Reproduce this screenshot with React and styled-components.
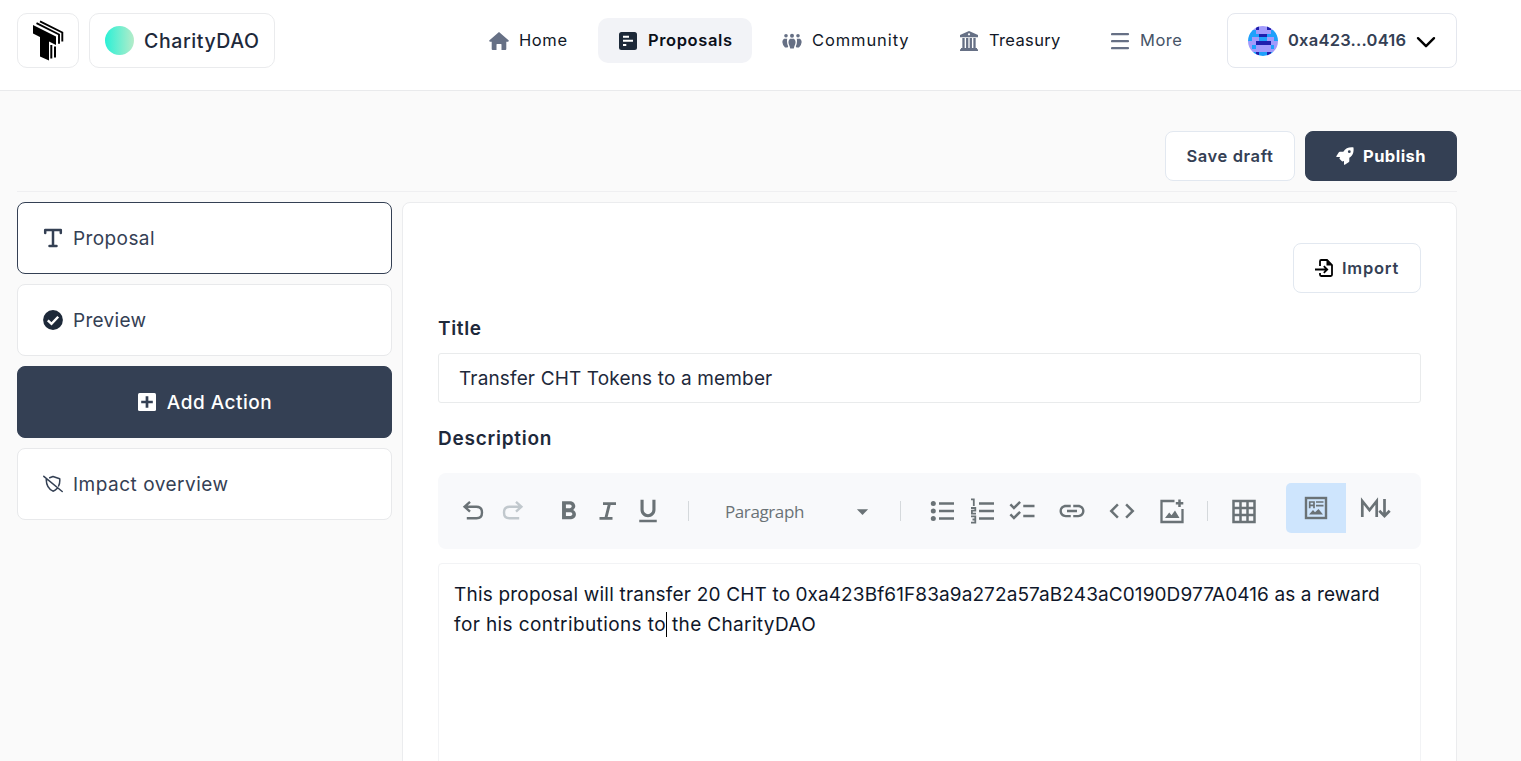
import React from "react";
import styled, { createGlobalStyle } from "styled-components";
import {
  MdFormatBold,
  MdFormatUnderlined,
  MdChecklist,
  MdLink,
  MdCode,
  MdArrowDropDown,
} from "react-icons/md";

const GlobalStyle = createGlobalStyle`
  *, *::before, *::after { box-sizing: border-box; }
  body {
    margin: 0;
    background: #fafafa;
    font-family: Inter, "Liberation Sans", sans-serif;
    color: #1e293b;
  }
  svg { display: block; flex: none; }
`;

const Page = styled.div`
  height: 761px;
  overflow: hidden;
  display: flex;
  flex-direction: column;
`;

const Text = styled.span`
  font-size: ${(p) => p.$size || 16.5}px;
  font-weight: ${(p) => p.$weight || 400};
  letter-spacing: ${(p) => p.$track || 0}px;
  color: ${(p) => p.$color || "inherit"};
  white-space: nowrap;
`;

const Header = styled.header`
  display: flex;
  height: 91px;
  flex: none;
  padding: 13px 64px 0 17px;
  background: #fff;
  border-bottom: 1px solid #e9eaec;
`;

const LogoBox = styled.a`
  width: 62px;
  height: 55px;
  border: 1px solid #eaebed;
  border-radius: 10px;
  display: flex;
  align-items: center;
  justify-content: center;
`;

const OrgBox = styled(LogoBox)`
  width: 186px;
  margin-left: 10px;
  padding-left: 15px;
  justify-content: flex-start;
  gap: 10px;
`;

const OrgAvatar = styled.span`
  width: 29px;
  height: 29px;
  border-radius: 50%;
  background: linear-gradient(90deg, #2af0d6, #b5ecc9);
`;

const Nav = styled.nav`
  display: flex;
  gap: 10px;
  margin: 5px 0 0 194px;
`;

const NavItem = styled.a`
  display: flex;
  align-items: center;
  gap: 10px;
  width: ${(p) => p.$width}px;
  height: 45px;
  padding-left: 20px;
  border-radius: 10px;
  background: ${(p) => (p.$active ? "#f2f3f7" : "transparent")};
  color: ${(p) => (p.$active ? "#0b0f19" : p.$muted ? "#475467" : "#111827")};

  ${Text} {
    margin-bottom: 2px;
  }
`;

const Wallet = styled.button`
  display: flex;
  align-items: center;
  width: 230px;
  height: 55px;
  margin-left: auto;
  padding: 0 0 0 20px;
  gap: 10px;
  border: 1px solid #e4e7ee;
  border-radius: 8px;
  background: #fff;
  font-family: inherit;
  color: #344054;

  ${Text} {
    margin-bottom: 2px;
  }
`;

const Main = styled.main`
  display: flex;
  flex-direction: column;
  width: 1440px;
  margin: 40px 0 0 17px;
  flex: 1;
  min-height: 0;
`;

const Actions = styled.div`
  display: flex;
  justify-content: flex-end;
  gap: 10px;
  padding-bottom: 10px;
  border-bottom: 1px solid #efeff1;
`;

const Button = styled.button`
  display: flex;
  align-items: center;
  justify-content: center;
  gap: 9px;
  width: ${(p) => p.$width}px;
  height: 50px;
  padding: 0;
  border: 1px solid ${(p) => (p.$dark ? "#344054" : "#e2e8f0")};
  border-radius: 8px;
  background: ${(p) => (p.$dark ? "#344054" : "#fff")};
  color: ${(p) => (p.$dark ? "#fff" : "#344054")};
  font-family: inherit;
`;

const Columns = styled.div`
  display: flex;
  gap: 10px;
  margin-top: 10px;
  flex: 1;
  min-height: 0;
`;

const Sidebar = styled.aside`
  display: flex;
  flex-direction: column;
  gap: 10px;
  width: 375px;
`;

const Step = styled.div`
  display: flex;
  align-items: center;
  justify-content: ${(p) => (p.$dark ? "center" : "flex-start")};
  gap: 10px;
  height: 72px;
  padding: 0 25px;
  border: 1px solid ${(p) => (p.$dark || p.$active ? "#344054" : "#e8e9eb")};
  border-radius: 8px;
  background: ${(p) => (p.$dark ? "#344054" : "#fff")};
  color: ${(p) => (p.$dark ? "#fff" : "#344054")};
`;

const Panel = styled.section`
  flex: 1;
  display: flex;
  flex-direction: column;
  height: 700px;
  padding: 40px 35px 0;
  border: 1px solid #ebecee;
  border-radius: 8px;
  background: #fff;
`;

const PanelTop = styled.div`
  display: flex;
  justify-content: flex-end;
`;

const Label = styled.label`
  display: flex;
  align-items: center;
  height: 30px;
  margin: ${(p) => p.$margin};
`;

const TitleField = styled.div`
  display: flex;
  align-items: center;
  height: 50px;
  padding-left: 20px;
  border: 1px solid #e9ebec;
  border-radius: 3px;
`;

const Toolbar = styled.div`
  display: flex;
  align-items: center;
  height: 76px;
  flex: none;
  padding-left: 15px;
  border-radius: 8px;
  background: #f8f9fb;
  color: #6a7276;
`;

const Tool = styled.span`
  display: flex;
  align-items: center;
  justify-content: center;
  width: ${(p) => p.$width || 40}px;
  height: 40px;
  color: ${(p) => (p.$disabled ? "#c1c8cd" : "inherit")};
`;

const Divider = styled.span`
  width: 1px;
  height: 20px;
  margin: ${(p) => p.$margin};
  background: #d5d9dc;
`;

const BlockSelect = styled.span`
  display: flex;
  align-items: center;
  justify-content: space-between;
  width: 151px;
  font-family: "Open Sans", "Noto Sans", sans-serif;
`;

const ModeSwitch = styled.span`
  display: flex;
  margin: 0 0 6px 22px;
`;

const ModeTool = styled.span`
  display: flex;
  align-items: center;
  justify-content: center;
  width: 60px;
  height: 50px;
  border-radius: 5px 0 0 5px;
  background: ${(p) => (p.$active ? "#cee5fd" : "transparent")};
`;

const Editor = styled.div`
  flex: 1;
  margin-top: 14px;
  padding: 15px;
  border: 1px solid #f2f3f5;
  border-radius: 4px;
  color: #0f172a;
`;

const Line = styled.p`
  display: flex;
  align-items: center;
  gap: ${(p) => p.$gap || 0}px;
  height: 30px;
  margin: 0;
`;

const Caret = styled.span`
  width: 1px;
  height: 25px;
  margin-right: 5px;
  background: #000;
`;

const LogoMark = () => (
  <svg width="32" height="42" viewBox="0 0 32 42">
    <path d="M1 5 24 16.500V25L17 21.500V40.500L8 36.500V17L1 13.500Z" fill="#000" />
    <path d="M4.500 3.200 27 14.500V23.800M8 1.400 30.300 12.500V21.500" fill="none" stroke="#000" strokeWidth="1.900" />
    <path d="M19.300 25V38.500M23 26.500V37.500" fill="none" stroke="#000" strokeWidth="2" />
  </svg>
);

const HomeIcon = () => (
  <svg width="20" height="20" viewBox="0 0 20 20" fill="#667085">
    <path d="M10 1 19.800 9.600Q20 10.700 19 10.700H17.300V18Q17.300 19 16.300 19H12.500V13.500Q12.500 13 12 13H8Q7.500 13 7.500 13.500V19H3.700Q2.700 19 2.700 18V10.700H1Q0 10.700.2 9.600Z" />
  </svg>
);

const ProposalsIcon = () => (
  <svg width="20" height="20" viewBox="0 0 20 20">
    <rect x="1" y="1" width="18" height="18" rx="2.500" fill="#1d2939" />
    <path d="M5 5.700H11M5 9.800H15M5 13.900H8.300" stroke="#fff" strokeWidth="2" />
  </svg>
);

const CommunityIcon = () => (
  <svg width="20" height="20" viewBox="0 0 20 20" fill="#667085">
    <circle cx="4" cy="4.800" r="1.800" />
    <circle cx="10" cy="4.800" r="2" />
    <circle cx="16" cy="4.800" r="1.800" />
    <path d="M2 7.800H5.200Q4.500 12 6.200 15.500L5.500 16.500H3Q-1.800 11 2 7.800ZM18 7.800H14.800Q15.500 12 13.800 15.500L14.500 16.500H17Q21.800 11 18 7.800Z" />
    <path d="M8 7.800H12Q15 10.500 12.300 15.500L11.800 17.500H8.200L7.700 15.500Q5 10.500 8 7.800Z" />
  </svg>
);

const TreasuryIcon = () => (
  <svg width="20" height="22" viewBox="0 0 20 22">
    <path d="M10 1 19 5V7.300H1V5ZM2 18H18V19.300H19V21H1V19.300H2Z" fill="#667085" />
    <path d="M4.500 8V18M8.200 8V18M11.800 8V18M15.500 8V18" stroke="#667085" strokeWidth="2.300" />
    <circle cx="10" cy="4.300" r="1.100" fill="#fff" />
  </svg>
);

const MenuIcon = () => (
  <svg width="19" height="20" viewBox="0 0 19 20">
    <path d="M1 3.200H17M1 10.200H17M1 17.200H17" stroke="#667085" strokeWidth="2.200" strokeLinecap="round" />
  </svg>
);

const PIXELS = ["PPNPPNPP", "BBPPPPBB", "BBBNNBBB", "BPPBBPPB", "PPNNNNPP", "PBPPPPBP", "PPPPPPPP", "BBNBBNBB"];
const PIXEL_COLORS = { P: "#a29bfc", N: "#1f1fae", B: "#1fa1fb" };

const Blockie = () => (
  <svg width="30" height="30" viewBox="0 0 8 8" shapeRendering="crispEdges">
    <clipPath id="blockie-clip">
      <circle cx="4" cy="4" r="4" />
    </clipPath>
    <g clipPath="url(#blockie-clip)">
      {PIXELS.map((row, y) =>
        row.split("").map((c, x) => <rect key={`${x}-${y}`} x={x} y={y} width="1.020" height="1.020" fill={PIXEL_COLORS[c]} />)
      )}
    </g>
  </svg>
);

const ChevronIcon = () => (
  <svg width="20" height="20" viewBox="0 0 20 20">
    <path d="M2 7.200 10 15.200 18 7.200" fill="none" stroke="#000" strokeWidth="2.400" strokeLinecap="round" strokeLinejoin="round" />
  </svg>
);

const RocketIcon = () => (
  <svg width="18" height="18" viewBox="0 0 18 18">
    <path
      d="M17.500.4C12.500 0 9.600 1.300 7.300 4.700H3.800Q3.100 4.700 2.700 5.400L.3 9.200Q0 10 .8 10H4L3.400 11.800 6.200 14.600 8 14V17.200Q8 18 8.800 17.700L12.600 15.300Q13.300 14.900 13.300 14.200V10.700C16.700 8.400 18 5.500 17.500.4Z"
      fill="#fff"
    />
    <circle cx="13.300" cy="4.700" r="1.400" fill="#344054" />
  </svg>
);

const TypeIcon = () => (
  <svg width="20" height="20" viewBox="0 0 20 20">
    <path d="M2.200 5V2H17.800V5M10 2V18M6.500 18H13.500" fill="none" stroke="#344054" strokeWidth="2.500" strokeLinecap="round" strokeLinejoin="round" />
  </svg>
);

const CheckIcon = () => (
  <svg width="20" height="20" viewBox="0 0 20 20">
    <circle cx="10" cy="10" r="9.900" fill="#1d2939" />
    <path d="M4.800 10.300 8.500 13.900 15.200 6.700" fill="none" stroke="#fff" strokeWidth="2.400" />
  </svg>
);

const PlusSquareIcon = () => (
  <svg width="20" height="20" viewBox="0 0 20 20">
    <rect x="1" y="1" width="18" height="18" rx="1.500" fill="#fff" />
    <path d="M10 4.200V15.800M4.200 10H15.800" stroke="#344054" strokeWidth="2.700" />
  </svg>
);

const ShieldOffIcon = () => (
  <svg width="20" height="20" viewBox="0 0 20 20" fill="none" stroke="#344054" strokeWidth="1.500" strokeLinecap="round" strokeLinejoin="round">
    <path d="M.8 2.300 19.200 17.500M3.200 5.500C3.300 10.500 5.500 15 10 17.200 11.700 16.600 13 15.600 14 14.400M6.700 3.800 10 2.500 16.700 4.700C17 7.500 16.600 10 15.600 12" />
  </svg>
);

const ImportIcon = () => (
  <svg width="18" height="18" viewBox="0 0 18 18" fill="none" stroke="#000" strokeWidth="1.800">
    <path d="M5 7V2.200Q5 1 6.200 1H12L17 6V15.800Q17 17 15.800 17H6.200Q5 17 5 15.800V14" />
    <path d="M0 10.500H11.500M8.800 7.200 12.200 10.500 8.800 13.800" />
    <path d="M11.500 1V6.500H17Z" fill="#000" strokeWidth="0" />
  </svg>
);

const UndoIcon = ({ flip }) => (
  <svg width="22" height="22" viewBox="0 0 22 22" fill="none" stroke="currentColor" strokeWidth="2.400">
    <g transform={flip ? "translate(22 0) scale(-1 1)" : undefined}>
      <path d="M8 1.800 2.600 6.700 8 11.600M2.800 6.700H14.500Q20 6.700 20 12.500T14.500 18.300H4.800" />
    </g>
  </svg>
);

const ItalicIcon = () => (
  <svg width="20" height="20" viewBox="0 0 20 20" fill="none" stroke="currentColor" strokeWidth="2.900">
    <path d="M5 2.600H18M1.500 17.400H14.500M11.500 2.600 7.800 17.400" />
  </svg>
);

const BulletListIcon = () => (
  <svg width="26" height="26" viewBox="0 0 26 26">
    <path d="M10 5.500H25M10 13H25M10 20.500H25" stroke="currentColor" strokeWidth="2.700" />
    <g fill="currentColor">
      <circle cx="4.300" cy="5.500" r="2.500" />
      <circle cx="4.300" cy="13" r="2.500" />
      <circle cx="4.300" cy="20.500" r="2.500" />
    </g>
  </svg>
);

const NumberListIcon = () => (
  <svg width="26" height="28" viewBox="0 0 26 28" fill="none" stroke="currentColor">
    <path d="M10 6.500H25M10 14H25M10 21.500H25" strokeWidth="2.700" />
    <path d="M2 2.300H4.800V9M2 11H6.300V13.700H2.900V16.700H7M2 19.300H6.300V25.700H2M3.500 22.500H6" strokeWidth="1.800" />
  </svg>
);

const AddImageIcon = () => (
  <svg width="26" height="26" viewBox="0 0 26 26">
    <path d="M15.500 3H2.500V24H23.500V11" fill="none" stroke="currentColor" strokeWidth="2.300" />
    <path d="M20.500 1.500V9M16.800 5.200H24.300" stroke="currentColor" strokeWidth="2.500" />
    <path d="M6 20 10.200 14.500 12.500 17.300 16 12.500 20.500 20Z" fill="currentColor" />
  </svg>
);

const TableIcon = () => (
  <svg width="26" height="26" viewBox="0 0 26 26">
    <path d="M2.500 3H23.500V24H2.500ZM9.500 3V24M16.500 3V24M2.500 10H23.500M2.500 17H23.500" fill="none" stroke="currentColor" strokeWidth="2.500" />
  </svg>
);

const WysiwygIcon = () => (
  <svg width="24" height="24" viewBox="0 0 24 24" fill="none" stroke="currentColor">
    <rect x="2" y="2" width="20" height="20" strokeWidth="2.400" />
    <path d="M5.700 12.200V6H10V12.200M5.700 9.400H10" strokeWidth="1.700" />
    <path d="M12 6H19.500M12 9.700H19.500" strokeWidth="1.700" />
    <path d="M5 18.500 9 14 11 16.300 14.500 13 19 18.500Z" fill="currentColor" stroke="none" />
  </svg>
);

const MarkdownIcon = () => (
  <svg width="32" height="24" viewBox="0 0 32 24" fill="none" stroke="currentColor" strokeWidth="2.700">
    <path d="M2.300 21V5L9.500 14 16.700 5V21" />
    <path d="M24.500 3V20M19.300 14.700 24.500 20 29.700 14.700" />
  </svg>
);

export default function App() {
  return (
    <Page>
      <GlobalStyle />
      <Header>
        <LogoBox>
          <LogoMark />
        </LogoBox>
        <OrgBox>
          <OrgAvatar />
          <Text $size={19.5} $weight={500} $track={0.6}>CharityDAO</Text>
        </OrgBox>
        <Nav>
          <NavItem $width={119}>
            <HomeIcon />
            <Text $track={0.6}>Home</Text>
          </NavItem>
          <NavItem $width={154} $active>
            <ProposalsIcon />
            <Text $weight={600} $track={0.6}>Proposals</Text>
          </NavItem>
          <NavItem $width={167}>
            <CommunityIcon />
            <Text $track={0.9}>Community</Text>
          </NavItem>
          <NavItem $width={142}>
            <TreasuryIcon />
            <Text $track={0.35}>Treasury</Text>
          </NavItem>
          <NavItem $width={111} $muted>
            <MenuIcon />
            <Text $track={0.5}>More</Text>
          </NavItem>
        </Nav>
        <Wallet>
          <Blockie />
          <Text $weight={600} $track={0.23}>0xa423...0416</Text>
          <ChevronIcon />
        </Wallet>
      </Header>
      <Main>
        <Actions>
          <Button $width={130}>
            <Text $weight={600} $track={0.6}>Save draft</Text>
          </Button>
          <Button $width={152} $dark>
            <RocketIcon />
            <Text $weight={700} $track={0.45}>Publish</Text>
          </Button>
        </Actions>
        <Columns>
          <Sidebar>
            <Step $active>
              <TypeIcon />
              <Text $size={19} $track={0.4}>Proposal</Text>
            </Step>
            <Step>
              <CheckIcon />
              <Text $size={19} $track={0.3}>Preview</Text>
            </Step>
            <Step $dark>
              <PlusSquareIcon />
              <Text $size={19} $weight={500} $track={0.5}>Add Action</Text>
            </Step>
            <Step>
              <ShieldOffIcon />
              <Text $size={19} $track={0.5}>Impact overview</Text>
            </Step>
          </Sidebar>
          <Panel>
            <PanelTop>
              <Button $width={128}>
                <ImportIcon />
                <Text $weight={600} $track={0.8}>Import</Text>
              </Button>
            </PanelTop>
            <Label $margin="20px 0 10px">
              <Text $size={19} $weight={600} $track={0.65}>Title</Text>
            </Label>
            <TitleField>
              <Text $size={19} $track={0.15}>Transfer CHT Tokens to a member</Text>
            </TitleField>
            <Label $margin="20px 0">
              <Text $size={19} $weight={600} $track={0.75}>Description</Text>
            </Label>
            <Toolbar>
              <Tool><UndoIcon /></Tool>
              <Tool $disabled><UndoIcon flip /></Tool>
              <Tool $width={70}><MdFormatBold size={31} /></Tool>
              <Tool $width={10}><ItalicIcon /></Tool>
              <Tool $width={70}><MdFormatUnderlined size={30} /></Tool>
              <Divider $margin="0 36px 0 5px" />
              <BlockSelect>
                <Text $size={17} $track={-0.4}>Paragraph</Text>
                <MdArrowDropDown size={27} />
              </BlockSelect>
              <Divider $margin="0 21px 0 24px" />
              <Tool><BulletListIcon /></Tool>
              <Tool><NumberListIcon /></Tool>
              <Tool><MdChecklist size={30} /></Tool>
              <Tool $width={60}><MdLink size={30} /></Tool>
              <Tool><MdCode size={30} /></Tool>
              <Tool $width={60}><AddImageIcon /></Tool>
              <Divider $margin="0 16px 0 5px" />
              <Tool><TableIcon /></Tool>
              <ModeSwitch>
                <ModeTool $active><WysiwygIcon /></ModeTool>
                <ModeTool><MarkdownIcon /></ModeTool>
              </ModeSwitch>
            </Toolbar>
            <Editor>
              <Line $gap={5}>
                <Text $size={19} $track={0.2}>This proposal will transfer 20 CHT to</Text>
                <Text $size={19} $track={0.1}>0xa423Bf61F83a9a272a57aB243aC0190D977A0416 as a reward</Text>
              </Line>
              <Line>
                <Text $size={19} $track={0.4}>for his contributions to</Text>
                <Caret />
                <Text $size={19} $track={0.35}>the CharityDAO</Text>
              </Line>
            </Editor>
          </Panel>
        </Columns>
      </Main>
    </Page>
  );
}
